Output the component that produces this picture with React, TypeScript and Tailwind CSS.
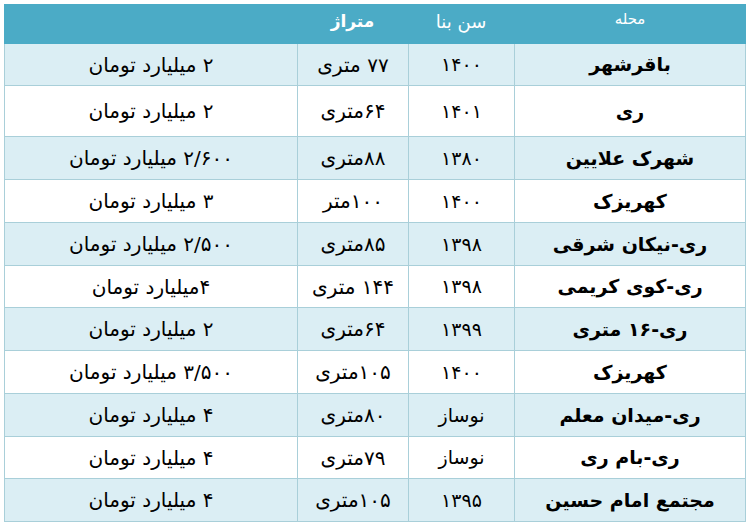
import React from "react";

const rows: [string, string, string, string][] = [
  ["باقرشهر", "۱۴۰۰", "۷۷ متری", "۲ میلیارد تومان"],
  ["ری", "۱۴۰۱", "۶۴متری", "۲ میلیارد تومان"],
  ["شهرک علایین", "۱۳۸۰", "۸۸متری", "۲/۶۰۰ میلیارد تومان"],
  ["کهریزک", "۱۴۰۰", "۱۰۰متر", "۳ میلیارد تومان"],
  ["ری-نیکان شرقی", "۱۳۹۸", "۸۵متری", "۲/۵۰۰ میلیارد تومان"],
  ["ری-کوی کریمی", "۱۳۹۸", "۱۴۴ متری", "۴میلیارد تومان"],
  ["ری-۱۶ متری", "۱۳۹۹", "۶۴متری", "۲ میلیارد تومان"],
  ["کهریزک", "۱۴۰۰", "۱۰۵متری", "۳/۵۰۰ میلیارد تومان"],
  ["ری-میدان معلم", "نوساز", "۸۰متری", "۴ میلیارد تومان"],
  ["ری-بام ری", "نوساز", "۷۹متری", "۴ میلیارد تومان"],
  ["مجتمع امام حسین", "۱۳۹۵", "۱۰۵متری", "۴ میلیارد تومان"],
];

const heights = [42, 51, 43, 43, 43, 42, 43, 43, 43, 42, 43];

export default function App() {
  return (
    <div className="w-[752px] h-[526px] bg-white pt-[4px] pl-[4px]">
      <div
        dir="rtl"
        className="w-[742px] text-black"
        style={{ fontFamily: '"DejaVu Sans", "Noto Sans", sans-serif' }}
      >
        <div className="grid grid-cols-[232px_106px_111px_293px] h-[40px] bg-[#4babc6] text-white">
          <div className="flex items-center justify-center pb-[10px] text-[15px]">محله</div>
          <div className="flex items-center justify-center pb-[6px] text-[18px]">سن بنا</div>
          <div className="flex items-center justify-center pb-[4px] text-[17px] font-bold">متراژ</div>
          <div></div>
        </div>
        <div className="border-l border-r border-[#a9cfd9]">
          {rows.map((r, i) => (
            <div
              key={i}
              className={`grid grid-cols-[231px_106px_111px_292px] border-b border-[#a9cfd9] ${
                i % 2 === 0 ? "bg-[#dbeef4]" : "bg-white"
              }`}
              style={{ height: heights[i] }}
            >
              <div className="flex items-center justify-center border-l border-[#a9cfd9] text-[19px] font-bold">
                {r[0]}
              </div>
              <div className="flex items-center justify-center border-l border-[#a9cfd9] text-[19px]">
                {r[1]}
              </div>
              <div className="flex items-center justify-center border-l border-[#a9cfd9] text-[20px]">
                {r[2]}
              </div>
              <div className="flex items-center justify-center text-[20px]">{r[3]}</div>
            </div>
          ))}
        </div>
      </div>
    </div>
  );
}
